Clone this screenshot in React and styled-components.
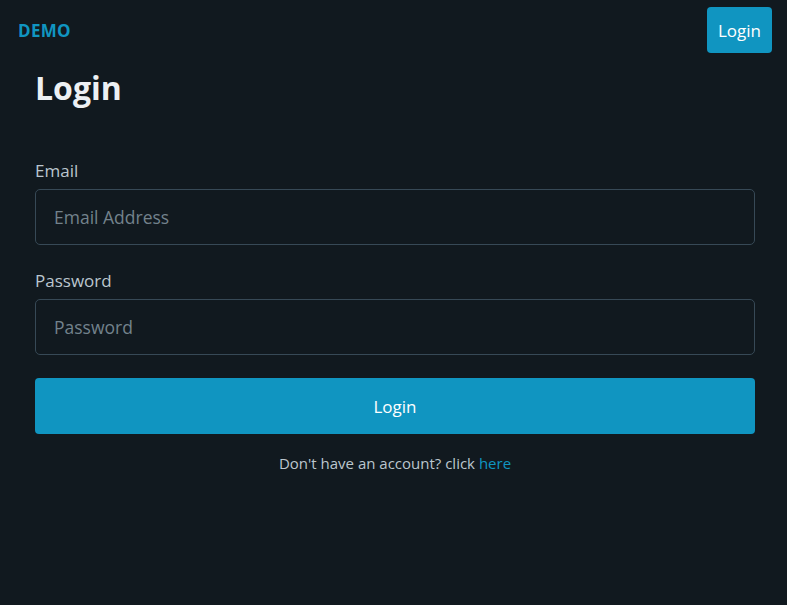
import React, { useState } from "react";
import styled, { createGlobalStyle } from "styled-components";

const GlobalStyle = createGlobalStyle`
  html, body {
    margin: 0;
    padding: 0;
    background: #11191f;
    min-height: 100%;
  }
  body {
    font-family: "Open Sans", "Noto Sans", sans-serif;
    color: #bbc6ce;
  }
  * {
    box-sizing: border-box;
  }
`;

export default function App() {
  const [email, setEmail] = useState("");
  const [password, setPassword] = useState("");

  return (
    <Page>
      <GlobalStyle />
      <Nav>
        <Brand>DEMO</Brand>
        <NavButton>Login</NavButton>
      </Nav>
      <Main>
        <Title>Login</Title>
        <Form onSubmit={(e) => e.preventDefault()}>
          <Field>
            <Label htmlFor="email">Email</Label>
            <Input
              id="email"
              type="email"
              placeholder="Email Address"
              value={email}
              onChange={(e) => setEmail(e.target.value)}
            />
          </Field>
          <Field>
            <Label htmlFor="password">Password</Label>
            <Input
              id="password"
              type="password"
              placeholder="Password"
              value={password}
              onChange={(e) => setPassword(e.target.value)}
            />
          </Field>
          <SubmitButton type="submit">Login</SubmitButton>
        </Form>
        <Footnote>
          Don't have an account? click <Link href="#">here</Link>
        </Footnote>
      </Main>
    </Page>
  );
}

const Page = styled.div`
  min-height: 605px;
  background: #11191f;
`;

const Nav = styled.nav`
  display: flex;
  align-items: center;
  justify-content: space-between;
  height: 60px;
  padding: 0 15px 0 18px;
`;

const Brand = styled.div`
  font-size: 17px;
  font-weight: 700;
  color: #1095c1;
  letter-spacing: 0.3px;
`;

const NavButton = styled.button`
  height: 46px;
  padding: 0 11px;
  border: none;
  border-radius: 4px;
  background: #1095c1;
  color: #fff;
  font-family: inherit;
  font-size: 17px;
  cursor: pointer;
`;

const Main = styled.main`
  width: 720px;
  margin: 0 32px 0 35px;
  padding-top: 6px;
`;

const Title = styled.h1`
  margin: 0 0 48px;
  font-size: 32px;
  font-weight: 700;
  line-height: 44px;
  color: #edf0f3;
`;

const Form = styled.form`
  display: flex;
  flex-direction: column;
`;

const Field = styled.div`
  display: flex;
  flex-direction: column;
  margin-bottom: 23px;
`;

const Label = styled.label`
  font-size: 17px;
  line-height: 26px;
  margin-bottom: 5px;
  color: #bbc6ce;
`;

const Input = styled.input`
  height: 56px;
  padding: 0 18px;
  border: 1px solid #374956;
  border-radius: 5px;
  background: #11191f;
  color: #bbc6ce;
  font-family: inherit;
  font-size: 17.5px;
  outline: none;
  &::placeholder {
    color: #73828c;
  }
  &:focus {
    border-color: #1095c1;
  }
`;

const SubmitButton = styled.button`
  height: 56px;
  border: none;
  border-radius: 4px;
  background: #1095c1;
  color: #fff;
  font-family: inherit;
  font-size: 17px;
  cursor: pointer;
`;

const Footnote = styled.p`
  margin: 18px 0 0;
  text-align: center;
  font-size: 15px;
  line-height: 22px;
  color: #bbc6ce;
`;

const Link = styled.a`
  color: #1095c1;
  text-decoration: none;
`;
